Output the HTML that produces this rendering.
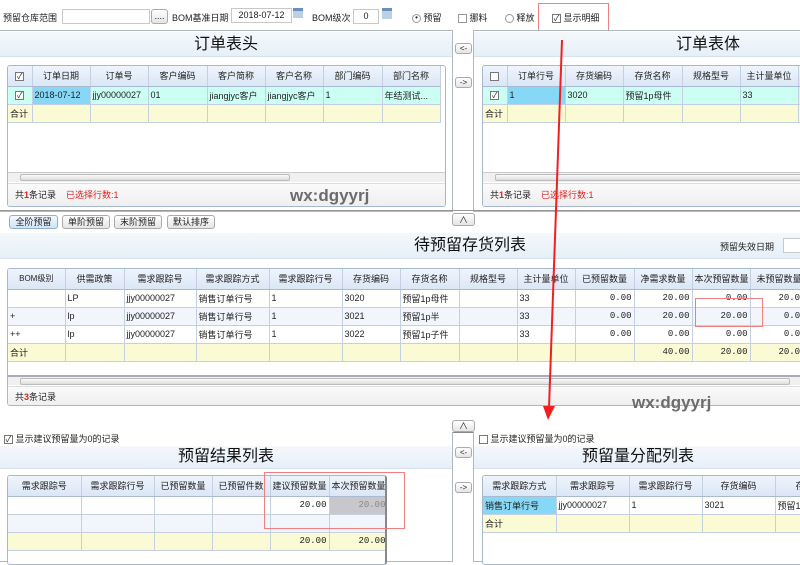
<!DOCTYPE html>
<html><head><meta charset="utf-8"><style>
*{box-sizing:border-box;margin:0;padding:0}
body{width:800px;height:555px;overflow:hidden;background:#fff;font-family:"Liberation Sans","Noto Sans CJK SC",sans-serif;font-size:9px;color:#222;position:relative}
.a{position:absolute}
.inp{position:absolute;border:1px solid #c8c8c8;background:#fff;height:15px;font-size:9px;text-align:center;line-height:13px}
.btn{position:absolute;border:1px solid #aaa;border-radius:3px;background:linear-gradient(#fff,#e4e4e4);font-size:9px;text-align:center;line-height:12px}
.panel{position:absolute;border:1px solid #b0b8c0;background:#fff}
.band{position:absolute;left:0;right:0;background:linear-gradient(#f4f8fc,#e6eff8);border-bottom:1px solid #d8e2ec;font-size:16px;text-align:center;color:#111}
.grid{position:absolute;border:1px solid #a8b8cc;border-radius:3px;background:#fff;overflow:hidden}
table{border-collapse:collapse;table-layout:fixed;font-size:9px}
td{border-right:1px solid #c4d0e0;border-bottom:1px solid #c4d0e0;height:18px;padding:0 2px;white-space:nowrap;overflow:hidden}
tr.h td{background:linear-gradient(#eef4fc,#dbe7f6);text-align:center;height:20px;border-bottom:1px solid #aabbd0}
tr.c td{background:#ccfff4}
tr.s td{background:#fafad4}
tr.w td{background:#fff}
tr.l td{background:#f2f6fc}
.r{text-align:right;font-family:"Liberation Mono",monospace}
.sb{position:absolute;left:0;right:0;height:10px;background:#f0f0f0;border-top:1px solid #ccc}
.sb i{position:absolute;left:12px;top:1px;height:7px;width:270px;background:linear-gradient(#fafafa,#ddd);border:1px solid #bbb;border-radius:2px}
.st{position:absolute;left:0;right:0;background:linear-gradient(#fafafa,#eee);border-top:1px solid #ddd;font-size:9px;padding-left:7px}
.red{color:#e02020}
.cb{display:inline-block;width:9px;height:9px;border:1px solid #777;background:#fff;font-size:8px;line-height:7px;text-align:center;vertical-align:middle}
.wm{position:absolute;font-family:"Liberation Sans",sans-serif;font-weight:bold;font-size:17px;color:#6c6c6c}
</style></head><body>

<div class="a" style="left:3px;top:11px">预留仓库范围</div>
<div class="inp" style="left:62px;top:9px;width:88px"></div>
<div class="btn" style="left:151px;top:9px;width:17px;height:15px">....</div>
<div class="a" style="left:172px;top:11px">BOM基准日期</div>
<div class="inp" style="left:231px;top:8px;width:61px">2018-07-12</div>
<div class="a" style="left:293px;top:8px;width:10px;height:10px;background:#bcd0e4;border-top:3px solid #6a8fb8"></div>
<div class="a" style="left:312px;top:11px">BOM级次</div>
<div class="inp" style="left:353px;top:9px;width:26px">0</div>
<div class="a" style="left:382px;top:8px;width:10px;height:11px;background:#bcd0e4;border-top:3px solid #6a8fb8"></div>
<div class="a" style="left:412px;top:11px"><span style="display:inline-block;width:9px;height:9px;border:1px solid #999;border-radius:50%;vertical-align:middle;text-align:center;line-height:5px;font-size:8px">•</span> 预留</div>
<div class="a" style="left:458px;top:11px"><span class="cb" style="border-color:#999"></span> 挪料</div>
<div class="a" style="left:505px;top:11px"><span style="display:inline-block;width:9px;height:9px;border:1px solid #999;border-radius:50%;vertical-align:middle"></span> 释放</div>
<div class="a" style="left:552px;top:11px"><span class="cb">✓</span> 显示明细</div>
<div class="a" style="left:538px;top:3px;width:71px;height:28px;border:1px solid #f08080"></div>

<div class="panel" style="left:-1px;top:30px;width:454px;height:182px">
 <div class="band" style="top:1px;height:25px;line-height:25px">订单表头</div>
 <div class="grid" style="left:7px;top:34px;width:439px;height:142px">
  <table style="width:432px"><colgroup><col style="width:24px"><col style="width:58px"><col style="width:58px"><col style="width:59px"><col style="width:58px"><col style="width:58px"><col style="width:59px"><col style="width:58px"></colgroup>
  <tr class="h"><td><span class="cb">✓</span></td><td>订单日期</td><td>订单号</td><td>客户编码</td><td>客户简称</td><td>客户名称</td><td>部门编码</td><td>部门名称</td></tr>
  <tr class="c"><td style="text-align:center"><span class="cb">✓</span></td><td style="background:#86d8f6">2018-07-12</td><td>jjy00000027</td><td>01</td><td>jiangjyc客户</td><td>jiangjyc客户</td><td>1</td><td>年结测试...</td></tr>
  <tr class="s"><td>合计</td><td></td><td></td><td></td><td></td><td></td><td></td><td></td></tr>
  </table>
  <div class="sb" style="top:106px"><i></i></div>
  <div class="st" style="top:117px;height:25px;line-height:23px">共<b class="red">1</b>条记录 &nbsp; &nbsp;<span class="red">已选择行数:1</span></div>
 </div>
</div>
<div class="wm" style="left:290px;top:186px">wx:dgyyrj</div>

<div class="btn" style="left:455px;top:43px;width:17px;height:11px;font-size:8px;line-height:9px">&lt;-</div>
<div class="btn" style="left:455px;top:77px;width:17px;height:11px;font-size:8px;line-height:9px">-&gt;</div>

<div class="panel" style="left:473px;top:30px;width:330px;height:182px">
 <div class="band" style="top:1px;height:25px;line-height:25px;text-indent:140px">订单表体</div>
 <div class="grid" style="left:8px;top:34px;width:330px;height:142px">
  <table style="width:340px"><colgroup><col style="width:24px"><col style="width:58px"><col style="width:58px"><col style="width:59px"><col style="width:58px"><col style="width:58px"><col style="width:25px"></colgroup>
  <tr class="h"><td><span class="cb"></span></td><td>订单行号</td><td>存货编码</td><td>存货名称</td><td>规格型号</td><td>主计量单位</td><td></td></tr>
  <tr class="c"><td style="text-align:center"><span class="cb">✓</span></td><td style="background:#86d8f6">1</td><td>3020</td><td>预留1p母件</td><td></td><td>33</td><td></td></tr>
  <tr class="s"><td>合计</td><td></td><td></td><td></td><td></td><td></td><td></td></tr>
  </table>
  <div class="sb" style="top:106px"><i style="left:12px;width:400px"></i></div>
  <div class="st" style="top:117px;height:25px;line-height:23px">共<b class="red">1</b>条记录 &nbsp; &nbsp;<span class="red">已选择行数:1</span></div>
 </div>
</div>

<div class="a" style="left:0;top:210px;width:800px;height:1px;background:#999"></div>
<div class="btn" style="left:452px;top:213px;width:23px;height:13px;font-size:9px">∧</div>
<div class="btn" style="left:9px;top:215px;width:49px;height:14px;background:linear-gradient(#f4f9ff,#cfe2f6);border-color:#8fb0d0">全阶预留</div>
<div class="btn" style="left:62px;top:215px;width:48px;height:14px">单阶预留</div>
<div class="btn" style="left:114px;top:215px;width:48px;height:14px">末阶预留</div>
<div class="btn" style="left:167px;top:215px;width:48px;height:14px">默认排序</div>
<div class="band" style="top:233px;height:26px;line-height:26px;text-indent:140px">待预留存货列表</div>
<div class="a" style="left:720px;top:240px">预留失效日期</div>
<div class="inp" style="left:783px;top:238px;width:20px"></div>

<div class="grid" style="left:7px;top:268px;width:800px;height:138px">
 <table style="width:800px"><colgroup><col style="width:57px"><col style="width:59px"><col style="width:72px"><col style="width:73px"><col style="width:73px"><col style="width:58px"><col style="width:59px"><col style="width:58px"><col style="width:58px"><col style="width:59px"><col style="width:58px"><col style="width:58px"><col style="width:58px"></colgroup>
 <tr class="h"><td style="font-size:8px">BOM级别</td><td>供需政策</td><td>需求跟踪号</td><td>需求跟踪方式</td><td>需求跟踪行号</td><td>存货编码</td><td>存货名称</td><td>规格型号</td><td>主计量单位</td><td>已预留数量</td><td>净需求数量</td><td>本次预留数量</td><td>未预留数量</td></tr>
 <tr class="w"><td></td><td>LP</td><td>jjy00000027</td><td>销售订单行号</td><td>1</td><td>3020</td><td>预留1p母件</td><td></td><td>33</td><td class="r">0.00</td><td class="r">20.00</td><td class="r">0.00</td><td class="r">20.00</td></tr>
 <tr class="l"><td>+</td><td>lp</td><td>jjy00000027</td><td>销售订单行号</td><td>1</td><td>3021</td><td>预留1p半</td><td></td><td>33</td><td class="r">0.00</td><td class="r">20.00</td><td class="r">20.00</td><td class="r">0.00</td></tr>
 <tr class="w"><td>++</td><td>lp</td><td>jjy00000027</td><td>销售订单行号</td><td>1</td><td>3022</td><td>预留1p子件</td><td></td><td>33</td><td class="r">0.00</td><td class="r">0.00</td><td class="r">0.00</td><td class="r">0.00</td></tr>
 <tr class="s"><td>合计</td><td></td><td></td><td></td><td></td><td></td><td></td><td></td><td></td><td></td><td class="r">40.00</td><td class="r">20.00</td><td class="r">20.00</td></tr>
 </table>
 <div class="sb" style="top:106px;border-top:2px solid #aab"><i style="width:770px"></i></div>
 <div class="st" style="top:117px;height:21px;line-height:20px">共<b class="red">3</b>条记录</div>
</div>
<div class="a" style="left:695px;top:298px;width:68px;height:29px;border:1px solid #f08080"></div>
<div class="wm" style="left:632px;top:393px">wx:dgyyrj</div>

<div class="a" style="left:0;top:432px;width:800px;height:1px;background:#888"></div>
<div class="btn" style="left:452px;top:420px;width:23px;height:12px;font-size:9px;line-height:10px">∧</div>

<div class="panel" style="left:-1px;top:432px;width:454px;height:130px;border-top:none">
 <div class="a" style="left:4px;top:2px;line-height:11px"><span class="cb">✓</span> 显示建议预留量为0的记录</div>
 <div class="band" style="top:14px;height:23px;line-height:21px">预留结果列表</div>
 <div class="grid" style="left:7px;top:43px;width:380px;height:90px;border-right:2px solid #888">
  <table style="width:380px"><colgroup><col style="width:73px"><col style="width:73px"><col style="width:58px"><col style="width:58px"><col style="width:59px"><col style="width:59px"></colgroup>
  <tr class="h"><td>需求跟踪号</td><td>需求跟踪行号</td><td>已预留数量</td><td>已预留件数</td><td>建议预留数量</td><td>本次预留数量</td></tr>
  <tr class="w"><td></td><td></td><td></td><td></td><td class="r">20.00</td><td class="r" style="background:#c8c8cc;color:#888">20.00</td></tr>
  <tr class="l"><td></td><td></td><td></td><td></td><td></td><td></td></tr>
  <tr class="s"><td></td><td></td><td></td><td></td><td class="r">20.00</td><td class="r">20.00</td></tr>
  </table>
 </div>
</div>
<div class="a" style="left:264px;top:472px;width:141px;height:57px;border:1px solid #f08080"></div>

<div class="btn" style="left:455px;top:447px;width:17px;height:11px;font-size:8px;line-height:9px">&lt;-</div>
<div class="btn" style="left:455px;top:482px;width:17px;height:11px;font-size:8px;line-height:9px">-&gt;</div>

<div class="panel" style="left:473px;top:432px;width:330px;height:130px;border-top:none">
 <div class="a" style="left:5px;top:2px;line-height:11px"><span class="cb"></span> 显示建议预留量为0的记录</div>
 <div class="band" style="top:14px;height:23px;line-height:21px">预留量分配列表</div>
 <div class="grid" style="left:8px;top:43px;width:330px;height:90px">
  <table style="width:330px"><colgroup><col style="width:73px"><col style="width:73px"><col style="width:73px"><col style="width:73px"><col style="width:50px"></colgroup>
  <tr class="h"><td>需求跟踪方式</td><td>需求跟踪号</td><td>需求跟踪行号</td><td>存货编码</td><td>存</td></tr>
  <tr class="w"><td style="background:#86d8f6">销售订单行号</td><td>jjy00000027</td><td>1</td><td>3021</td><td>预留1p</td></tr>
  <tr class="s"><td>合计</td><td></td><td></td><td></td><td></td></tr>
  </table>
 </div>
</div>

<svg class="a" style="left:0;top:0" width="800" height="555"><line x1="562" y1="40" x2="549" y2="408" stroke="#f02020" stroke-width="2"/><polygon points="543,406 555,406 548,420" fill="#f02020"/></svg>
</body></html>
